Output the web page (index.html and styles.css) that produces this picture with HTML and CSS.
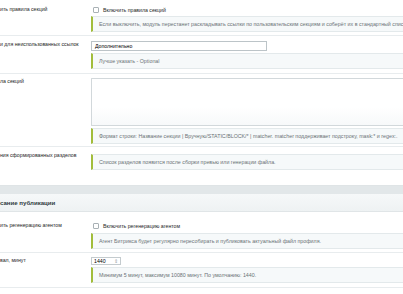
FILE: index.html
```html
<!DOCTYPE html>
<html lang="ru">
<head>
    <meta charset="UTF-8">
    <title>Настройки профиля</title>
    <link rel="stylesheet" href="styles.css">
</head>
<body>
    <div class="settings">
        <div class="row row-first">
            <div class="label">ить правила секций</div>
            <div class="field">
                <label class="check"><span class="box"></span>Включить правила секций</label>
                <div class="hint">Если выключить, модуль перестанет раскладывать ссылки по пользовательским секциям и соберёт их в стандартный список.</div>
            </div>
        </div>

        <div class="row">
            <div class="label">и для неиспользованных ссылок</div>
            <div class="field">
                <div class="text-input">Дополнительно</div>
                <div class="hint">Лучше указать - Optional</div>
            </div>
        </div>

        <div class="row row-area">
            <div class="label">ла секций</div>
            <div class="field">
                <div class="textarea"></div>
                <div class="hint">Формат строки: Название секции | Вручную/STATIC/BLOCK/* | matcher. matcher поддерживает подстроку, mask:* и regex:.</div>
            </div>
        </div>

        <div class="row row-tall">
            <div class="label">ния сформированных разделов</div>
            <div class="field">
                <div class="hint">Список разделов появится после сборки превью или генерации файла.</div>
            </div>
        </div>

        <div class="section-gap"></div>
        <div class="section-title">сание публикации</div>

        <div class="row row-agent">
            <div class="label">ить регенерацию агентом</div>
            <div class="field">
                <label class="check"><span class="box"></span>Включить регенерацию агентом</label>
                <div class="hint">Агент Битрикса будет регулярно пересобирать и публиковать актуальный файл профиля.</div>
            </div>
        </div>

        <div class="row row-number">
            <div class="label">вал, минут</div>
            <div class="field">
                <div class="number-input"><span>1440</span><span class="spin">&#8661;</span></div>
                <div class="hint">Минимум 5 минут, максимум 10080 минут. По умолчанию: 1440.</div>
            </div>
        </div>
    </div>
</body>
</html>
```

FILE: styles.css
```css
body {
    margin: 0;
    background: #fff;
    font-family: "Liberation Sans", Arial, sans-serif;
    color: #000;
    overflow: hidden;
}
.settings {
    width: 403px;
}
.row {
    display: grid;
    grid-template-columns: 91px 1fr;
    padding: 5px 0 4px;
    border-bottom: 1px solid #e8ecee;
}
.row-first {
    padding: 6px 0 3px;
}
.row-area {
    padding: 4px 0 2px;
}
.row-tall {
    padding: 7px 0 15px;
    border-bottom: none;
}
.row-tall .label {
    margin-top: -2px;
}
.row-agent {
    padding: 10px 0 3px;
}
.row-number {
    padding-top: 4px;
}
.label {
    font-size: 5.2px;
    line-height: 7px;
    white-space: nowrap;
    overflow: hidden;
    color: #1e1e1e;
}
.field {
    display: flex;
    flex-direction: column;
    gap: 2px;
    min-width: 0;
}
.row-agent .field {
    gap: 3px;
}
.check {
    display: flex;
    align-items: center;
    gap: 4px;
    height: 8px;
    padding-left: 2px;
    font-size: 5.2px;
    color: #1e1e1e;
    white-space: nowrap;
}
.box {
    width: 4px;
    height: 4px;
    border: 1px solid #a9b1b5;
    border-radius: 1px;
    background: #fff;
}
.hint {
    padding: 4px 6px 3px;
    line-height: 7px;
    font-size: 5.3px;
    color: #6b7276;
    background: #f6f9fa;
    border: 1px solid #e3e9eb;
    border-left: 2px solid #a2bd3b;
    border-right: none;
    white-space: nowrap;
    overflow: hidden;
}
.text-input {
    width: 168px;
    height: 8px;
    padding: 0 3px;
    font-size: 5.2px;
    line-height: 8px;
    border: 1px solid #bcc4c8;
    background: #fff;
}
.textarea {
    height: 46px;
    border: 1px solid #d2d8db;
    border-right: none;
    border-radius: 1px 0 0 1px;
    background: linear-gradient(#fff 60%, #f7f9fa);
}
.number-input {
    display: flex;
    justify-content: space-between;
    align-items: center;
    width: 24px;
    height: 6px;
    padding: 0 2px;
    font-size: 5.2px;
    border: 1px solid #c4cbce;
    background: #fff;
}
.spin {
    font-size: 5px;
    color: #9aa2a6;
}
.section-gap {
    height: 8px;
    background: #e2e7e9;
    border-top: 1px solid #dfe4e6;
}
.section-title {
    height: 17px;
    line-height: 17px;
    font-size: 6.1px;
    font-weight: bold;
    color: #2f3a40;
    white-space: nowrap;
    background: linear-gradient(#f6f8f9, #eef2f3);
    border-bottom: 1px solid #e0e5e7;
}
```
